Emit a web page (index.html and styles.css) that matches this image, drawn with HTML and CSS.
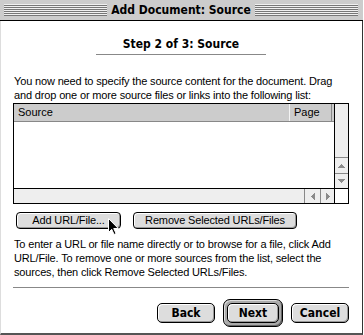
FILE: index.html
```html
<!DOCTYPE html>
<html lang="en">

<head>
    <meta charset="UTF-8">
    <title>Add Document: Source</title>
    <link rel="stylesheet" href="styles.css">
</head>

<body>
    <div class="window">
        <div class="titlebar">
            <div class="stripes"></div>
            <div class="title">Add Document: Source</div>
            <div class="stripes"></div>
        </div>
        <div class="content">
            <h1 class="step">Step 2 of 3: Source</h1>
            <div class="step-rule"></div>
            <p class="text intro">You now need to specify the source content for the document. Drag and drop one or more source files or links into the following list:</p>
            <!-- Source list -->
            <div class="list">
                <div class="list-main">
                    <div class="list-head">
                        <div class="head-cell head-source">Source</div>
                        <div class="head-cell head-page">Page</div>
                    </div>
                    <div class="list-body"></div>
                </div>
                <div class="vscroll">
                    <div class="arrow-box arrow-up">
                        <svg width="7" height="4" viewBox="0 0 7 4"><path d="M3 0h1v1h1v1h1v1h1v1H0V3h1V2h1V1h1z" fill="#8a8a8a"/></svg>
                    </div>
                    <div class="arrow-box arrow-down">
                        <svg width="7" height="4" viewBox="0 0 7 4"><path d="M0 0h7v1H6v1H5v1H4v1H3V3H2V2H1V1H0z" fill="#8a8a8a"/></svg>
                    </div>
                </div>
                <div class="hscroll">
                    <div class="arrow-box arrow-left">
                        <svg width="4" height="7" viewBox="0 0 4 7"><path d="M3 0h1v7H3V6H2V5H1V4H0V3h1V2h1V1h1z" fill="#8a8a8a"/></svg>
                    </div>
                    <div class="arrow-box arrow-right">
                        <svg width="4" height="7" viewBox="0 0 4 7"><path d="M0 0h1v1h1v1h1v1h1v1H3v1H2v1H1v1H0z" fill="#8a8a8a"/></svg>
                    </div>
                </div>
                <div class="corner"></div>
            </div>
            <!-- List buttons -->
            <div class="list-buttons">
                <button class="btn btn-add">Add URL/File...</button>
                <button class="btn btn-remove">Remove Selected URLs/Files</button>
            </div>
            <p class="text help">To enter a URL or file name directly or to browse for a file, click Add URL/File. To remove one or more sources from the list, select the sources, then click Remove Selected URLs/Files.</p>
            <div class="rule"></div>
            <!-- Wizard buttons -->
            <div class="wizard-buttons">
                <button class="btn btn-bold btn-back">Back</button>
                <div class="default-ring">
                    <button class="btn btn-bold btn-next">Next</button>
                </div>
                <button class="btn btn-bold btn-cancel">Cancel</button>
            </div>
        </div>
    </div>
    <svg class="cursor" width="12" height="19" viewBox="0 0 12 19">
        <path d="M1.5 1.5v14l3.2-3.2 2.4 5.2 2-1-2.4-5h4.6z" fill="#000" stroke="#fff" stroke-width="1"/>
    </svg>
</body>

</html>
```

FILE: styles.css
```css
body {
    margin: 0;
    background-color: #fff;
    font-family: 'Liberation Sans', Arial, sans-serif;
    color: #000;
    width: 364px;
    height: 335px;
    overflow: hidden;
}

.window {
    width: 363px;
}

.titlebar {
    height: 20px;
    background-color: #cccccc;
    border-bottom: 1px solid #000;
    display: flex;
    align-items: center;
    padding: 0 5px 0 4px;
    gap: 4px;
}

.stripes {
    flex: 1;
    height: 12px;
    background: repeating-linear-gradient(to bottom, #f0f0f0 0 1px, #777 1px 2px);
}

.title {
    font-family: 'DejaVu Sans Condensed', 'DejaVu Sans', sans-serif;
    font-weight: bold;
    font-size: 12px;
    line-height: 16px;
}

.content {
    box-sizing: border-box;
    border-left: 1px solid #dddddd;
    border-right: 1px solid #333;
    border-bottom: 2px solid #555;
    padding: 15px 13px 6px 12px;
}

.step {
    margin: 0;
    font-family: 'DejaVu Sans Condensed', 'DejaVu Sans', sans-serif;
    font-weight: bold;
    font-size: 12px;
    line-height: 16px;
    text-align: center;
}

.step-rule {
    width: 170px;
    height: 1px;
    background-color: #888;
    margin: 2px auto 0;
}

.text {
    margin: 0;
    font-size: 11px;
    line-height: 14px;
    letter-spacing: -0.15px;
    padding-left: 1px;
}

.intro {
    margin-top: 19px;
}

.list {
    margin-top: 1px;
    border: 1px solid #000;
    background-color: #000;
    display: grid;
    grid-template-columns: 320px 13px;
    grid-template-rows: 84px 14px;
    gap: 1px;
}

.list-main {
    background-color: #fff;
    display: flex;
    flex-direction: column;
}

.list-head {
    height: 17px;
    background-color: #cccccc;
    border-bottom: 1px solid #888;
    display: flex;
    font-size: 11px;
    line-height: 17px;
}

.head-cell {
    box-sizing: border-box;
}

.head-source {
    width: 275px;
    padding-left: 4px;
}

.head-page {
    width: 43px;
    padding-left: 4px;
    border-left: 1px solid #f4f4f4;
    border-right: 1px solid #888;
}

.list-body {
    flex: 1;
}

.vscroll {
    background-color: #eeeeee;
    display: flex;
    flex-direction: column;
    justify-content: flex-end;
}

.hscroll {
    background-color: #eeeeee;
    display: flex;
    justify-content: flex-end;
}

.arrow-box {
    display: flex;
    align-items: center;
    justify-content: center;
}

.arrow-box svg {
    display: block;
}

.arrow-up {
    height: 15px;
    border-top: 1px solid #888;
}

.arrow-down {
    height: 14px;
    border-top: 1px solid #888;
}

.arrow-left {
    width: 15px;
    border-left: 1px solid #888;
}

.arrow-right {
    width: 13px;
    border-left: 1px solid #888;
}

.corner {
    background-color: #fff;
}

.btn {
    box-sizing: border-box;
    margin: 0;
    padding: 0;
    border: 1px solid #000;
    border-radius: 4px;
    background-color: #dddddd;
    box-shadow: inset 1px 1px #fff, inset -1px -1px #999;
    font-family: 'Liberation Sans', Arial, sans-serif;
    font-size: 11px;
    color: #000;
    text-align: center;
}

.btn-bold {
    font-family: 'DejaVu Sans Condensed', 'DejaVu Sans', sans-serif;
    font-weight: bold;
    font-size: 12px;
    height: 20px;
    border-radius: 5px;
}

.list-buttons {
    margin-top: 8px;
    display: flex;
    gap: 12px;
    padding-left: 3px;
}

.list-buttons .btn {
    height: 17px;
    line-height: 15px;
    letter-spacing: -0.15px;
}

.btn-add {
    width: 105px;
}

.btn-remove {
    width: 164px;
}

.help {
    margin-top: 8px;
}

.rule {
    margin-top: 8px;
    height: 1px;
    background-color: #888;
}

.wizard-buttons {
    margin-top: 11px;
    display: flex;
    justify-content: flex-end;
    align-items: center;
    gap: 8px;
}

.btn-back {
    width: 58px;
}

.btn-cancel {
    width: 58px;
}

.default-ring {
    border: 1px solid #000;
    border-radius: 7px;
    padding: 3px;
    background-color: #aaaaaa;
    box-shadow: inset 1px 1px #ddd, inset -1px -1px #666;
    display: flex;
}

.btn-next {
    width: 52px;
}

.cursor {
    position: absolute;
    left: 107px;
    top: 217px;
}
```
